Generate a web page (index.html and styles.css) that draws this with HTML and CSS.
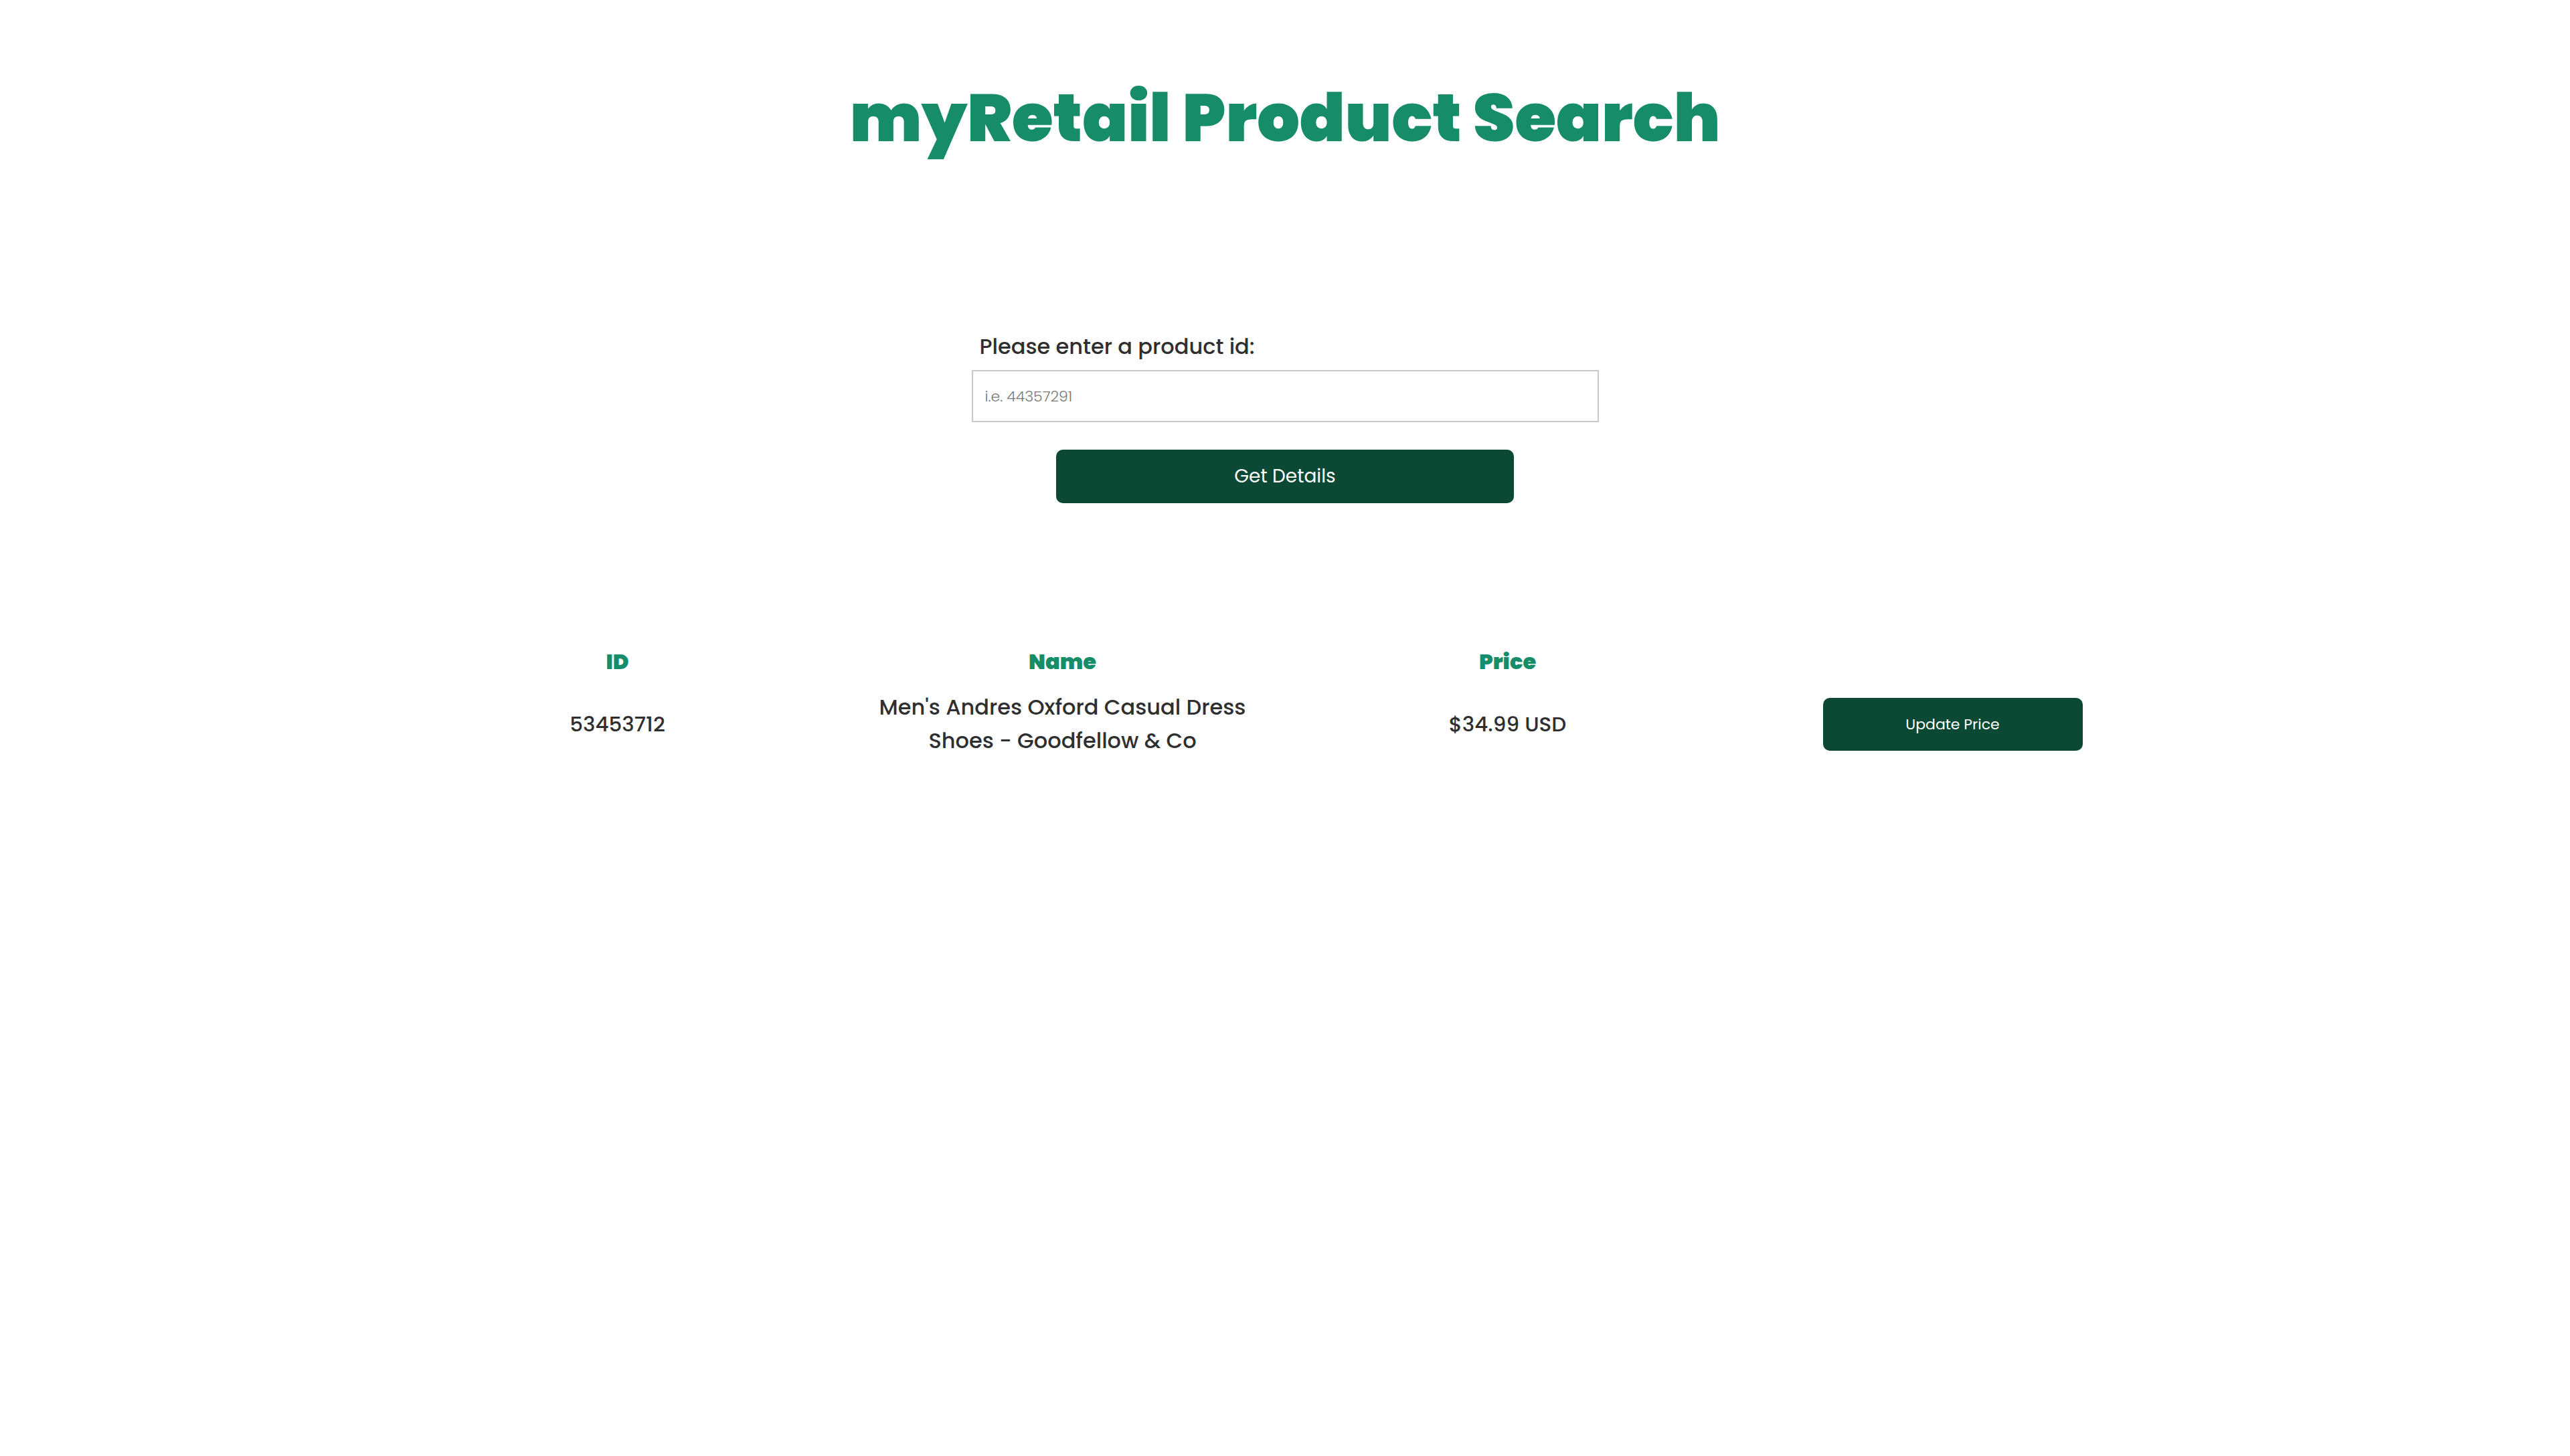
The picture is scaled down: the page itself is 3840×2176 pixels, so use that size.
FILE: index.html
```html
<!DOCTYPE html>
<html lang="en">
<head>
<meta charset="utf-8">
<title>myRetail Product Search</title>
<link rel="stylesheet" href="styles.css">
</head>
<body>
<main class="page">
  <h1 class="title">myRetail Product Search</h1>

  <form class="search" onsubmit="return false">
    <label class="search-label" for="pid">Please enter a product id:</label>
    <input class="search-input" id="pid" type="text" placeholder="i.e. 44357291">
    <button class="btn btn-get" type="submit">Get Details</button>
  </form>

  <section class="results">
    <div class="results-head">
      <div class="col-head">ID</div>
      <div class="col-head">Name</div>
      <div class="col-head">Price</div>
      <div class="col-head"></div>
    </div>
    <div class="results-row">
      <div class="cell">53453712</div>
      <div class="cell"><span class="cell-name">Men's Andres Oxford Casual Dress Shoes - Goodfellow &amp; Co</span></div>
      <div class="cell">$34.99 USD</div>
      <div class="cell"><button class="btn btn-update" type="button">Update Price</button></div>
    </div>
  </section>
</main>
</body>
</html>
```

FILE: styles.css
```css
* { box-sizing: border-box; }

html, body {
  margin: 0;
  padding: 0;
  background: #ffffff;
}

body {
  font-family: "Poppins", "Inter", "Noto Sans", sans-serif;
  color: #2f2f2f;
}

.page {
  display: flex;
  flex-direction: column;
  align-items: center;
  padding-top: 126px;
}

.title {
  margin: 0;
  font-size: 100px;
  line-height: 101px;
  font-weight: 900;
  color: #178c69;
  letter-spacing: 0;
}

.search {
  width: 937px;
  margin-top: 270px;
  display: flex;
  flex-direction: column;
  align-items: center;
}

.search-label {
  align-self: flex-start;
  margin-left: 12px;
  font-size: 32px;
  line-height: 42px;
  font-weight: 500;
  color: #2f2f2f;
}

.search-input {
  width: 100%;
  height: 78px;
  margin-top: 14px;
  padding: 0 18px;
  border: 2px solid #c9c9c9;
  border-radius: 0;
  font-family: inherit;
  font-size: 22px;
  font-weight: 300;
  color: #333;
  outline: none;
}

.search-input::placeholder {
  color: #777777;
}

.btn {
  border: none;
  background: #0b4934;
  color: #ffffff;
  font-family: inherit;
  cursor: pointer;
}

.btn-get {
  width: 684px;
  height: 80px;
  margin-top: 41px;
  border-radius: 10px;
  font-size: 28px;
  font-weight: 400;
}

.results {
  width: 2660px;
  margin-top: 214px;
}

.results-head,
.results-row {
  display: grid;
  grid-template-columns: repeat(4, 1fr);
  align-items: center;
  text-align: center;
}

.col-head {
  font-size: 32px;
  line-height: 46px;
  font-weight: 900;
  color: #178c69;
}

.results-row {
  margin-top: 20px;
}

.cell {
  display: flex;
  justify-content: center;
  font-size: 31px;
  line-height: 50px;
  font-weight: 500;
  color: #2f2f2f;
}

.cell-name {
  max-width: 580px;
  font-size: 32px;
}

.btn-update {
  width: 388px;
  height: 79px;
  border-radius: 10px;
  font-size: 22px;
  font-weight: 400;
}
```
